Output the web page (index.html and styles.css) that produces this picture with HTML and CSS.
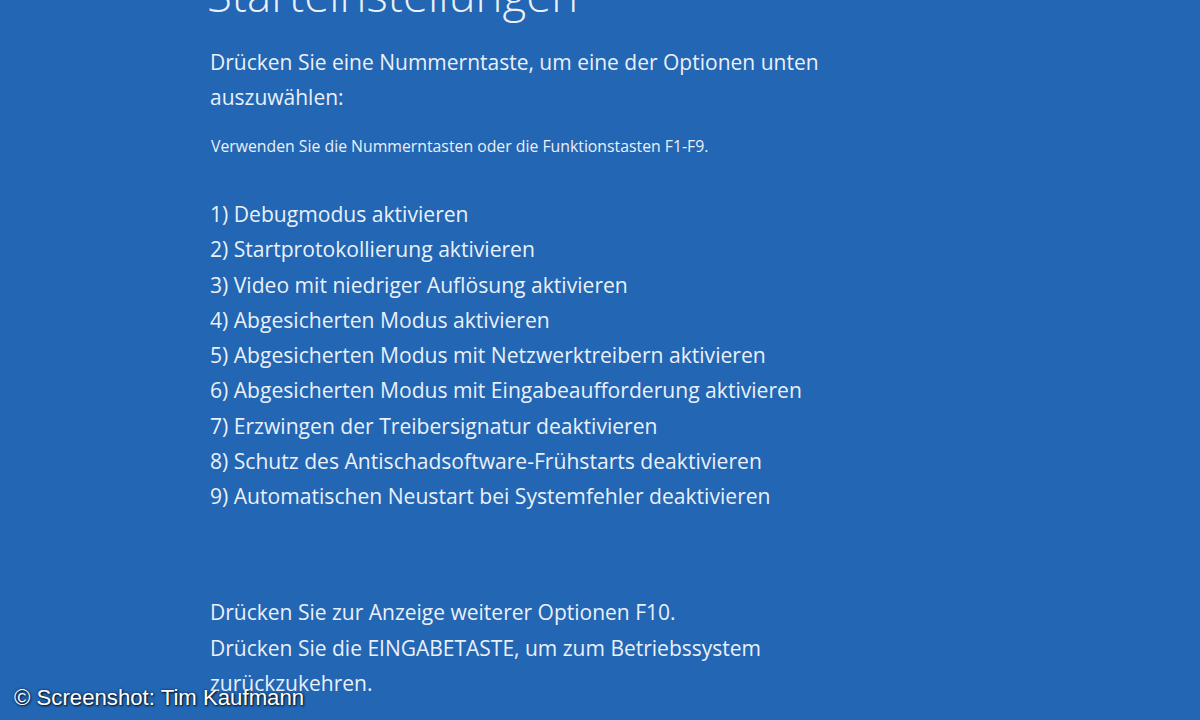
FILE: index.html
```html
<!DOCTYPE html>
<html lang="de">
<head>
<meta charset="utf-8">
<title>Starteinstellungen</title>
<link rel="stylesheet" href="styles.css">
</head>
<body>
<main class="screen">
  <h1 class="title">Starteinstellungen</h1>
  <p class="lead">Drücken Sie eine Nummerntaste, um eine der Optionen unten<br>auszuwählen:</p>
  <p class="hint">Verwenden Sie die Nummerntasten oder die Funktionstasten F1-F9.</p>
  <ol class="options">
    <li>1) Debugmodus aktivieren</li>
    <li>2) Startprotokollierung aktivieren</li>
    <li>3) Video mit niedriger Auflösung aktivieren</li>
    <li>4) Abgesicherten Modus aktivieren</li>
    <li>5) Abgesicherten Modus mit Netzwerktreibern aktivieren</li>
    <li>6) Abgesicherten Modus mit Eingabeaufforderung aktivieren</li>
    <li>7) Erzwingen der Treibersignatur deaktivieren</li>
    <li>8) Schutz des Antischadsoftware-Frühstarts deaktivieren</li>
    <li>9) Automatischen Neustart bei Systemfehler deaktivieren</li>
  </ol>
  <p class="footer">Drücken Sie zur Anzeige weiterer Optionen F10.<br>Drücken Sie die EINGABETASTE, um zum Betriebssystem<br>zurückzukehren.</p>
</main>
<div class="credit">© Screenshot: Tim Kaufmann</div>
</body>
</html>
```

FILE: styles.css
```css
html, body {
  margin: 0;
  padding: 0;
  height: 100%;
  overflow: hidden;
}
body {
  background: #2266b4;
  color: #eaf0f8;
  font-family: "Open Sans", "Noto Sans", sans-serif;
  position: relative;
}
.screen {
  padding-left: 210px;
}
.title {
  margin: -36px 0 0 -3px;
  font-weight: 300;
  font-size: 45.6px;
  line-height: 60px;
}
.lead {
  margin: 21px 0 0;
  font-size: 21px;
  line-height: 35px;
}
.hint {
  margin: 21px 0 0 1px;
  font-size: 15.8px;
  line-height: 20px;
}
.options {
  list-style: none;
  margin: 40px 0 0;
  padding: 0;
  font-size: 21.1px;
  line-height: 35.25px;
}
.footer {
  margin: 82px 0 0;
  font-size: 21px;
  line-height: 35.5px;
}
.credit {
  position: absolute;
  left: 14px;
  bottom: 9px;
  font-family: "Liberation Sans", Arial, sans-serif;
  font-size: 22.2px;
  color: #ffffff;
  letter-spacing: 0;
  text-shadow: 1px 1px 2px rgba(0,0,0,0.8), 0 0 3px rgba(0,0,0,0.6);
}
```
